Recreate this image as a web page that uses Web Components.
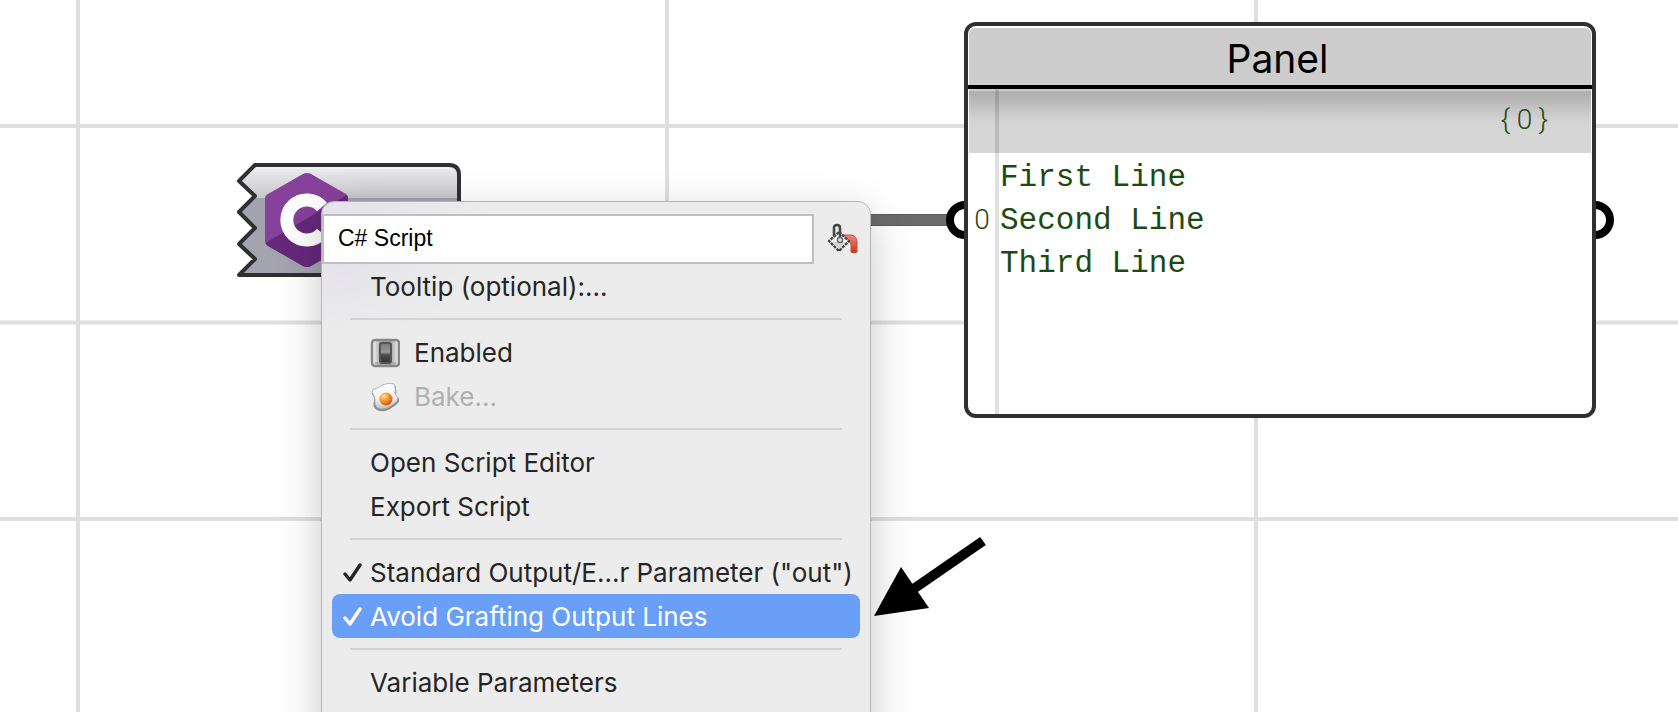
<!DOCTYPE html>
<html lang="en">
<head>
<meta charset="utf-8">
<title>C# Script component menu</title>
<style>
  html, body { margin: 0; height: 100%; }
  body { font-family: Inter, "Liberation Sans", sans-serif; background: #fff; }
</style>
</head>
<body>
<node-canvas>
  <script-node></script-node>
  <text-panel heading="Panel" path="0" index="0">
    <span>First Line</span>
    <span>Second Line</span>
    <span>Third Line</span>
  </text-panel>
  <context-menu name="C# Script">
    <menu-item>Tooltip (optional):...</menu-item>
    <menu-separator></menu-separator>
    <menu-item><switch-icon slot="icon"></switch-icon>Enabled</menu-item>
    <menu-item disabled><egg-icon slot="icon"></egg-icon>Bake...</menu-item>
    <menu-separator></menu-separator>
    <menu-item>Open Script Editor</menu-item>
    <menu-item>Export Script</menu-item>
    <menu-separator></menu-separator>
    <menu-item checked>Standard Output/E...r Parameter ("out")</menu-item>
    <menu-item checked active>Avoid Grafting Output Lines</menu-item>
    <menu-separator></menu-separator>
    <menu-item>Variable Parameters</menu-item>
  </context-menu>
  <pointer-arrow></pointer-arrow>
</node-canvas>

<script>
const define = (name, html, setup) => {
  const template = document.createElement('template');
  template.innerHTML = html;
  customElements.define(name, class extends HTMLElement {
    constructor() {
      super();
      this.attachShadow({ mode: 'open' }).append(template.content.cloneNode(true));
    }
    connectedCallback() { if (setup) setup(this, this.shadowRoot); }
  });
};

define('node-canvas', `
<style>
  :host { display: block; position: relative; height: 100vh; overflow: hidden; background: #fff; }
  .back { position: absolute; top: 0; left: 0; width: 100%; height: 100%; }
</style>
<svg class="back" aria-hidden="true">
  <defs>
    <pattern id="grid" x="76" y="124" width="589" height="196.5" patternUnits="userSpaceOnUse">
      <path d="M0 2H589M2 0V197" stroke="#dfdfdf" stroke-width="4"/>
    </pattern>
  </defs>
  <rect width="100%" height="100%" fill="url(#grid)"/>
  <path d="M478 220H950" stroke="#5a5a5a" stroke-width="12"/>
  <path d="M478 220H950" stroke="#6b6b6b" stroke-width="10"/>
</svg>
<slot></slot>`);

define('script-node', `
<style>
  :host { display: block; position: absolute; left: 230px; top: 156px; width: 260px; height: 130px; }
  svg { display: block; }
</style>
<svg width="260" height="130" viewBox="230 156 260 130" role="img" aria-label="C# Script">
  <defs>
    <linearGradient id="body" x1="0" y1="165" x2="0" y2="275" gradientUnits="userSpaceOnUse">
      <stop offset="0" stop-color="#efeef2"/><stop offset=".3" stop-color="#c6c6cc"/>
      <stop offset=".3" stop-color="#a3a3b0"/><stop offset="1" stop-color="#a4a4ae"/>
    </linearGradient>
    <clipPath id="hex"><path d="M303 174q4-2 8 0l35 20q2 2 2 4v44q0 3-2 4l-35 20q-4 2-8 0l-35-20q-3-2-3-5v-42q0-4 3-5z"/></clipPath>
  </defs>
  <circle cx="460" cy="220" r="15" fill="#fff" stroke="#000" stroke-width="8"/>
  <path d="M255 165H449Q459 165 459 175V265Q459 275 449 275H239L255 259L239 244L255 228L239 212L255 196L239 181Z" fill="url(#body)" stroke="#303030" stroke-width="4" stroke-linejoin="round"/>
  <path d="M256 168H449" stroke="#fff" stroke-width="1" opacity=".7"/>
  <g clip-path="url(#hex)">
    <path d="M260 170H350V270H260Z" fill="#86419a"/>
    <path d="M262 245L350 193V270H262Z" fill="#65297a"/>
  </g>
  <path d="M322 207A20 20 0 1 0 322 233" fill="none" stroke="#fff" stroke-width="13"/>
</svg>`);

define('text-panel', `
<style>
  :host { display: block; position: absolute; left: 964px; top: 22px; width: 632px; height: 396px; }
  svg { position: absolute; left: -22px; top: 176px; }
  svg.out { left: 610px; }
  section { position: relative; box-sizing: border-box; height: 100%; display: flex; flex-direction: column;
    border: 4px solid #303030; border-radius: 12px; background: #fff; overflow: hidden; }
  h2 { margin: 2px 1px 0; padding-right: 5px; height: 57px; line-height: 62px; background: #cdcdcd; border-radius: 6px 6px 0 0;
    text-align: center; font-weight: 400; font-size: 39px; color: #000; }
  hr { margin: 0; border: 0; width: 100%; height: 4px; background: #000; flex: none; }
  .path { margin: 0 1px; height: 64px; line-height: 58px; box-sizing: border-box; border-top: 2px solid #ccc; padding-right: 38px;
    display: flex; justify-content: flex-end; background: linear-gradient(#afafaf 0, #b6b6b6 8px, #d2d2d2 28px, #d6d6d6 40px); }
  .path span, .index { font: 300 28px Roboto, sans-serif; line-height: inherit; color: #1d4a12; width: 19px; text-align: center; }
  .data { flex: 1; display: grid; grid-template-columns: 32px 1fr; align-content: start; padding-top: 3px; }
  .index { align-self: center; width: auto; padding-right: 4px; line-height: 43px; padding-bottom: 2px; }
  .lines { display: flex; flex-direction: column; font: 31px "Liberation Mono", monospace; line-height: 43px; color: #1d4a12; }
  .rule { position: absolute; left: 27px; top: 63px; bottom: 0; width: 4px; background: rgba(0,0,0,.12); }
</style>
<svg width="44" height="44" viewBox="0 0 44 44" aria-hidden="true"><circle cx="23" cy="22" r="15" fill="#fff" stroke="#000" stroke-width="8"/></svg>
<svg class="out" width="44" height="44" viewBox="0 0 44 44" aria-hidden="true"><circle cx="21" cy="22" r="15" fill="#fff" stroke="#000" stroke-width="8"/></svg>
<section>
  <h2></h2>
  <hr>
  <div class="path"><span>{</span><span id="path"></span><span>}</span></div>
  <div class="data"><div class="index"></div><div class="lines"><slot></slot></div></div>
  <div class="rule"></div>
</section>`, (el, root) => {
  root.querySelector('h2').textContent = el.getAttribute('heading');
  root.querySelector('#path').textContent = el.getAttribute('path');
  root.querySelector('.index').textContent = el.getAttribute('index');
});

define('context-menu', `
<style>
  :host { display: block; position: absolute; left: 321px; top: 201px; width: 550px; height: 660px; box-sizing: border-box;
    border: 1px solid #b4b4b4; border-radius: 13px; background: radial-gradient(ellipse 170px 110px at 0 30px, #e2dfe9, #ececec);
    box-shadow: 0 14px 44px rgba(0,0,0,.22); }
  .name { display: flex; align-items: center; gap: 13px; padding-top: 12px; }
  input { box-sizing: border-box; width: 492px; height: 50px; border: 2px solid #bfbfbf; border-radius: 0; outline: 0; margin: 0;
    background: #fff; color: #000; padding: 0 14px 2px; font: 23px "Liberation Sans", sans-serif; }
  button { border: 0; padding: 0; margin: 0; background: none; width: 32px; height: 32px; }
  button svg { display: block; }
</style>
<div class="name">
  <input type="text" aria-label="Name">
  <button type="button" aria-label="Pick colour">
    <svg width="32" height="32" viewBox="0 0 32 32" fill="none">
      <defs><linearGradient id="paint" x1="0" y1="0" x2="0" y2="1"><stop offset="0" stop-color="#f08a78"/><stop offset="1" stop-color="#c8321f"/></linearGradient></defs>
      <path d="M16 12H24Q30 13 30 19V29Q27 31 24 29V21Q23 18 18 18Z" fill="url(#paint)" stroke="#c64a38" stroke-width="1"/>
      <path d="M12 9L22 18L12 28L2 18Z" fill="#f2f2f2" stroke="#454545" stroke-width="2.4" stroke-linejoin="round" stroke-dasharray="3 1"/>
      <path d="M5 19H19L12 26Z" fill="#d2d2d2"/>
      <path d="M7 13V5Q7 2 10 2Q13 2 13 5V15" stroke="#484848" stroke-width="2.6"/>
      <circle cx="13" cy="17" r="2.5" fill="#eee" stroke="#666" stroke-width="1.5"/>
    </svg>
  </button>
</div>
<div role="menu"><slot></slot></div>`, (el, root) => {
  root.querySelector('input').value = el.getAttribute('name');
});

define('menu-item', `
<style>
  :host { display: block; padding: 0 10px; }
  button { box-sizing: border-box; width: 100%; height: 44px; border: 0; border-radius: 8px; margin: 0; padding: 2px 0 0 10px;
    display: flex; align-items: center; background: none; text-align: left; white-space: nowrap;
    font: 26px Inter, sans-serif; line-height: 42px; color: #252525; }
  .mark { width: 28px; height: 20px; flex: none; visibility: hidden; }
  :host([checked]) .mark { visibility: visible; }
  :host([disabled]) button { color: #b0b0b0; }
  :host([active]) button { background: #6a9ff8; color: #fff; }
  ::slotted([slot=icon]) { margin-right: 13px; }
</style>
<button type="button" role="menuitem">
  <svg class="mark" viewBox="0 0 28 20" fill="none" stroke="currentColor" stroke-width="3.4" stroke-linecap="round" stroke-linejoin="round" aria-hidden="true"><path d="M3 11L8 17L18 2"/></svg>
  <slot name="icon"></slot><span><slot></slot></span>
</button>`, (el, root) => {
  const button = root.querySelector('button');
  button.disabled = el.hasAttribute('disabled');
  if (el.hasAttribute('checked')) {
    button.setAttribute('role', 'menuitemcheckbox');
    button.setAttribute('aria-checked', 'true');
  }
});

define('menu-separator', `
<style>
  :host { display: block; padding: 10px 28px; }
  hr { margin: 0; border: 0; height: 2px; background: #d3d3d3; }
</style>
<hr>`);

define('switch-icon', `
<style>:host { display: block; width: 31px; height: 30px; } svg { display: block; }</style>
<svg width="30" height="30" viewBox="0 0 30 30" aria-hidden="true">
  <defs>
    <linearGradient id="plate"><stop offset="0" stop-color="#fff"/><stop offset=".3" stop-color="#a8a8a8"/><stop offset=".7" stop-color="#a8a8a8"/><stop offset="1" stop-color="#f4f4f4"/></linearGradient>
    <linearGradient id="lever" x1="0" y1="0" x2="0" y2="1"><stop offset="0" stop-color="#777"/><stop offset=".45" stop-color="#999"/><stop offset=".6" stop-color="#4c4c4c"/><stop offset="1" stop-color="#333"/></linearGradient>
  </defs>
  <rect x="2" y="2" width="27" height="26" rx="3" fill="url(#plate)" stroke="#868686" stroke-width="2.5"/>
  <path d="M5 25H26" stroke="#aaa" stroke-width="2"/>
  <rect x="10" y="5" width="11" height="20" rx="2" fill="url(#lever)" stroke="#555" stroke-width="2"/>
</svg>`);

define('egg-icon', `
<style>:host { display: block; width: 31px; height: 30px; } svg { display: block; }</style>
<svg width="30" height="30" viewBox="0 0 30 30" aria-hidden="true">
  <defs>
    <radialGradient id="yolk" cx=".35" cy=".3" r=".75"><stop offset="0" stop-color="#ffe9a0"/><stop offset=".45" stop-color="#f79a2e"/><stop offset="1" stop-color="#dd4a12"/></radialGradient>
    <linearGradient id="white" x1="0" y1="0" x2="0" y2="1"><stop offset="0" stop-color="#fff"/><stop offset=".6" stop-color="#f0f0f0"/><stop offset="1" stop-color="#c4c4c4"/></linearGradient>
  </defs>
  <path d="M4 8Q9 7 13 4Q20 0 25 3Q27 7 26 13Q31 17 28 21Q25 24 20 27Q13 31 7 28Q2 25 4 19Q5 16 2 12Q1 9 4 8Z" fill="#8a8a8a"/>
  <path d="M4 7Q9 6 12 3Q19 0 24 2Q26 6 25 12Q29 15 27 19Q24 22 19 25Q13 28 8 26Q4 23 5 18Q5 15 3 12Q1 8 4 7Z" fill="url(#white)" stroke="#b5b5b5" stroke-width="1"/>
  <circle cx="16" cy="17" r="6.5" fill="url(#yolk)"/>
</svg>`);

define('pointer-arrow', `
<style>
  :host { display: block; position: absolute; left: 870px; top: 530px; width: 120px; height: 90px; }
  svg { display: block; }
</style>
<svg width="120" height="90" viewBox="870 530 120 90" aria-hidden="true">
  <path d="M912 590L983 541" stroke="#000" stroke-width="10"/>
  <path d="M874 616L901 567L929 608Z"/>
</svg>`);
</script>
</body>
</html>
